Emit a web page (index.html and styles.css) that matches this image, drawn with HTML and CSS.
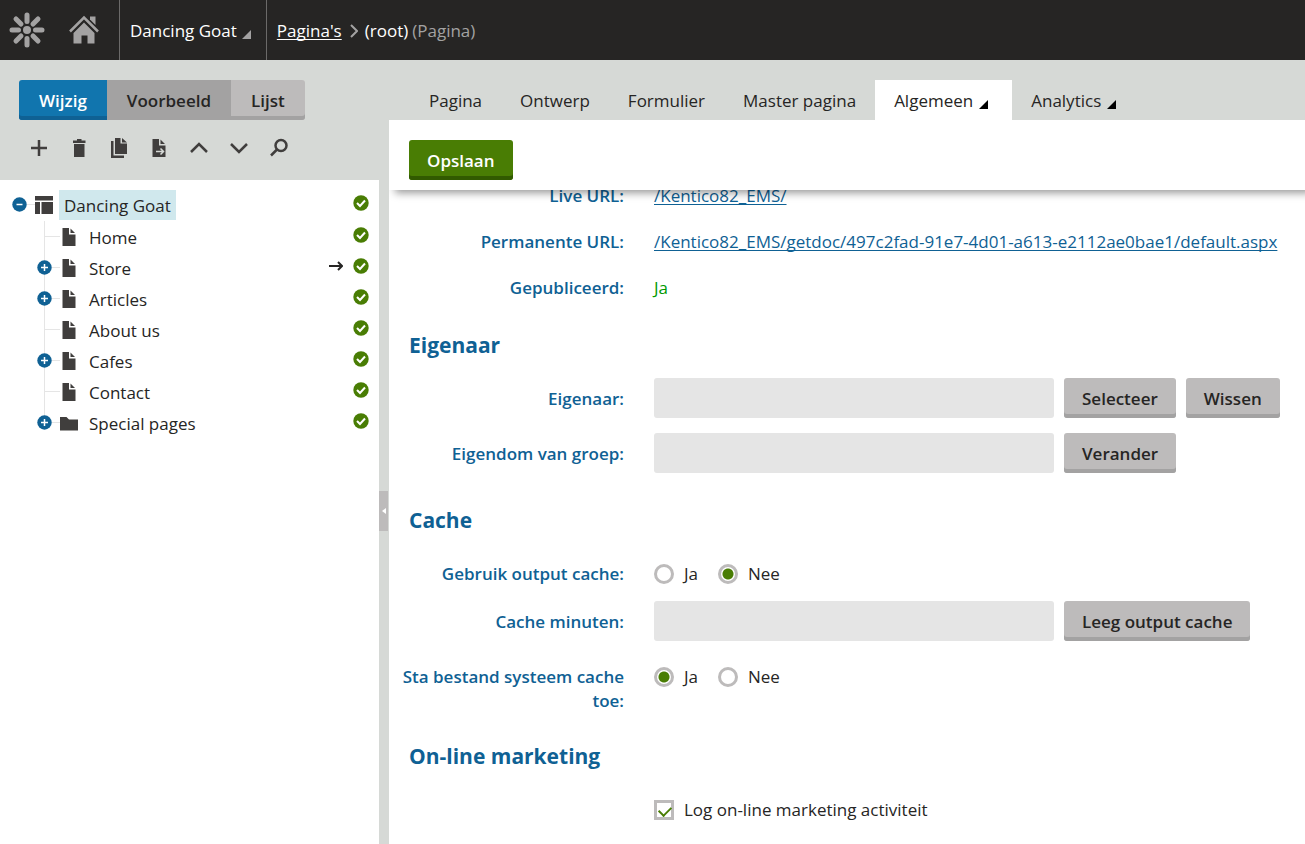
FILE: index.html
```
<!DOCTYPE html>
<html lang="nl">
<head>
    <meta charset="UTF-8">
    <meta name="viewport" content="width=device-width, initial-scale=1.0">
    <title>Dancing Goat - Pagina's</title>
    <link rel="stylesheet" href="styles.css">
</head>
<body>

    <!-- Shared icons -->
    <svg class="icon-defs" aria-hidden="true">
        <symbol id="icon-file" viewBox="0 0 18 18">
            <path d="M2.500 0H9v6.500h6.500V18h-13z"/>
            <path d="M10.500 .5L15 5h-4.500z"/>
        </symbol>
        <symbol id="icon-folder" viewBox="0 0 18 18">
            <path d="M0 3h6.500l2.500 2.500h9V16.500H0z"/>
        </symbol>
        <symbol id="icon-template" viewBox="0 0 18 18">
            <path d="M0 0h18v4.500H0zM0 6h5v12H0zM6.500 6H18v12H6.500z"/>
        </symbol>
        <symbol id="icon-plus" viewBox="0 0 15 15">
            <circle cx="7.500" cy="7.500" r="7.200" fill="#0f6194"/>
            <path d="M4 7.500h7M7.500 4v7" stroke="#fff" stroke-width="1.500"/>
        </symbol>
        <symbol id="icon-minus" viewBox="0 0 15 15">
            <circle cx="7.500" cy="7.500" r="7.200" fill="#0f6194"/>
            <path d="M4.500 7.500h6" stroke="#fff" stroke-width="1.500"/>
        </symbol>
        <symbol id="icon-check" viewBox="0 0 16 16">
            <circle cx="8" cy="8" r="7.700" fill="#497d04"/>
            <path d="M4 8l3 3 5-5.500" fill="none" stroke="#fff" stroke-width="2"/>
        </symbol>
        <symbol id="icon-caret" viewBox="0 0 9 9">
            <path d="M9 0v9H0z"/>
        </symbol>
    </svg>

    <header class="header">
        <a class="header-logo" href="#" aria-label="Kentico">
            <svg width="36" height="36" viewBox="-18 -18 36 36">
                <circle r="4"/>
                <g stroke="#a3a2a2" stroke-width="5" stroke-linecap="round">
                    <path d="M0-8.500V-15M0 8.500V15M-8.500 0H-15M8.500 0H15"/>
                    <path d="M-6-6l-5-5M6-6l5-5M-6 6l-5 5M6 6l5 5"/>
                </g>
            </svg>
        </a>
        <a class="header-home" href="#" aria-label="Home">
            <svg width="30" height="30" viewBox="0 0 30 30">
                <path d="M15 7.500L25.500 18v10.500h-7v-8h-6v8h-8V18z"/>
                <path d="M1 16.500l14-14 14 14" fill="none" stroke="#a3a2a2" stroke-width="2.500"/>
                <path d="M21 1.500h5.500V10L21 4.500z"/>
            </svg>
        </a>
        <button class="site-menu" type="button">Dancing Goat <svg class="caret" aria-hidden="true"><use href="#icon-caret"/></svg></button>
        <nav class="breadcrumb">
            <a href="#">Pagina's</a>
            <svg class="separator" viewBox="0 0 8 14"><path d="M1 1l6 6-6 6"/></svg>
            <span>(root)</span>
            <span class="page-type">(Pagina)</span>
        </nav>
    </header>

    <div class="workspace">
        <aside class="sidebar">
            <div class="sidebar-top">
                <div class="mode-switch">
                    <button class="mode mode-active" type="button">Wijzig</button>
                    <button class="mode mode-dark" type="button">Voorbeeld</button>
                    <button class="mode" type="button">Lijst</button>
                </div>
                <div class="tree-actions">
                    <button type="button" aria-label="Nieuw">
                        <svg viewBox="0 0 20 20"><path class="line" d="M2 10h16M10 2v16"/></svg>
                    </button>
                    <button type="button" aria-label="Verwijderen">
                        <svg viewBox="0 0 20 20"><path d="M5 6h10.500v13H5zM4 2.500h4V1h4.500v1.500h4v2.500H4z"/></svg>
                    </button>
                    <button type="button" aria-label="Kopiëren">
                        <svg viewBox="0 0 20 20"><path d="M6 0h5.500v5.500H18V16H6zM13 0l5 4.500h-5zM2 3h2.500v14.500H15V20H2z"/></svg>
                    </button>
                    <button type="button" aria-label="Verplaatsen">
                        <svg viewBox="0 0 20 20"><path d="M3.500 1H10v6.500h6.500V19h-13zM11.500 1.500l4.500 4.500h-4.500z"/><path d="M7 13.500h7M11.500 10.500l3 3-3 3" fill="none" stroke="#d6d9d6" stroke-width="1.500"/></svg>
                    </button>
                    <button type="button" aria-label="Omhoog">
                        <svg viewBox="0 0 20 20"><path class="line" d="M2 14l8-8 8 8"/></svg>
                    </button>
                    <button type="button" aria-label="Omlaag">
                        <svg viewBox="0 0 20 20"><path class="line" d="M2 6l8 8 8-8"/></svg>
                    </button>
                    <button type="button" aria-label="Zoeken">
                        <svg viewBox="0 0 20 20"><circle class="line" cx="12" cy="7.500" r="5.500"/><path class="line" d="M8 11.500l-6 6"/></svg>
                    </button>
                </div>
            </div>

            <div class="tree">
                <div class="tree-item tree-root">
                    <svg class="toggle"><use href="#icon-minus"/></svg>
                    <span class="branch"></span>
                    <svg class="node-icon"><use href="#icon-template"/></svg>
                    <a class="node-label selected" href="#">Dancing Goat</a>
                    <svg class="status"><use href="#icon-check"/></svg>
                </div>
                <ul class="tree-children">
                    <li class="tree-item">
                        <span class="branch branch-long"></span>
                        <svg class="node-icon"><use href="#icon-file"/></svg>
                        <a class="node-label" href="#">Home</a>
                        <svg class="status"><use href="#icon-check"/></svg>
                    </li>
                    <li class="tree-item">
                        <svg class="toggle"><use href="#icon-plus"/></svg>
                        <span class="branch"></span>
                        <svg class="node-icon"><use href="#icon-file"/></svg>
                        <a class="node-label" href="#">Store</a>
                        <svg class="redirect" viewBox="0 0 14 10"><path d="M0 5h12M9 1l4 4-4 4"/></svg>
                        <svg class="status"><use href="#icon-check"/></svg>
                    </li>
                    <li class="tree-item">
                        <svg class="toggle"><use href="#icon-plus"/></svg>
                        <span class="branch"></span>
                        <svg class="node-icon"><use href="#icon-file"/></svg>
                        <a class="node-label" href="#">Articles</a>
                        <svg class="status"><use href="#icon-check"/></svg>
                    </li>
                    <li class="tree-item">
                        <span class="branch branch-long"></span>
                        <svg class="node-icon"><use href="#icon-file"/></svg>
                        <a class="node-label" href="#">About us</a>
                        <svg class="status"><use href="#icon-check"/></svg>
                    </li>
                    <li class="tree-item">
                        <svg class="toggle"><use href="#icon-plus"/></svg>
                        <span class="branch"></span>
                        <svg class="node-icon"><use href="#icon-file"/></svg>
                        <a class="node-label" href="#">Cafes</a>
                        <svg class="status"><use href="#icon-check"/></svg>
                    </li>
                    <li class="tree-item">
                        <span class="branch branch-long"></span>
                        <svg class="node-icon"><use href="#icon-file"/></svg>
                        <a class="node-label" href="#">Contact</a>
                        <svg class="status"><use href="#icon-check"/></svg>
                    </li>
                    <li class="tree-item">
                        <svg class="toggle"><use href="#icon-plus"/></svg>
                        <span class="branch"></span>
                        <svg class="node-icon"><use href="#icon-folder"/></svg>
                        <a class="node-label" href="#">Special pages</a>
                        <svg class="status"><use href="#icon-check"/></svg>
                    </li>
                </ul>
            </div>
        </aside>

        <div class="splitter">
            <button class="splitter-handle" type="button" aria-label="Inklappen">
                <svg width="4" height="6" viewBox="0 0 4 6"><path d="M4 0v6L0 3z"/></svg>
            </button>
        </div>

        <main class="content">
            <nav class="tabs">
                <a class="tab" href="#">Pagina</a>
                <a class="tab" href="#">Ontwerp</a>
                <a class="tab" href="#">Formulier</a>
                <a class="tab" href="#">Master pagina</a>
                <a class="tab tab-active" href="#">Algemeen <svg class="caret"><use href="#icon-caret"/></svg></a>
                <a class="tab" href="#">Analytics <svg class="caret"><use href="#icon-caret"/></svg></a>
            </nav>

            <div class="save-bar">
                <button class="btn btn-primary" type="button">Opslaan</button>
            </div>

            <div class="form-scroll">
                <form class="form">
                    <div class="row row-text">
                        <span class="row-label">Live URL:</span>
                        <div class="row-value"><a href="#">/Kentico82_EMS/</a></div>
                    </div>
                    <div class="row row-text">
                        <span class="row-label">Permanente URL:</span>
                        <div class="row-value"><a href="#">/Kentico82_EMS/getdoc/497c2fad-91e7-4d01-a613-e2112ae0bae1/default.aspx</a></div>
                    </div>
                    <div class="row row-text">
                        <span class="row-label">Gepubliceerd:</span>
                        <div class="row-value published">Ja</div>
                    </div>

                    <h2>Eigenaar</h2>
                    <div class="row">
                        <label class="row-label" for="owner">Eigenaar:</label>
                        <div class="row-controls">
                            <input class="textbox" type="text" id="owner" disabled>
                            <button class="btn" type="button">Selecteer</button>
                            <button class="btn" type="button">Wissen</button>
                        </div>
                    </div>
                    <div class="row">
                        <label class="row-label" for="group">Eigendom van groep:</label>
                        <div class="row-controls">
                            <input class="textbox" type="text" id="group" disabled>
                            <button class="btn" type="button">Verander</button>
                        </div>
                    </div>

                    <h2>Cache</h2>
                    <div class="row">
                        <span class="row-label" id="outputCacheLabel">Gebruik output cache:</span>
                        <div class="row-options" role="radiogroup" aria-labelledby="outputCacheLabel">
                            <label class="option"><input type="radio" name="outputCache">Ja</label>
                            <label class="option"><input type="radio" name="outputCache" checked>Nee</label>
                        </div>
                    </div>
                    <div class="row">
                        <label class="row-label" for="cacheMinutes">Cache minuten:</label>
                        <div class="row-controls">
                            <input class="textbox" type="text" id="cacheMinutes" disabled>
                            <button class="btn" type="button">Leeg output cache</button>
                        </div>
                    </div>
                    <div class="row">
                        <span class="row-label" id="fileCacheLabel">Sta bestand systeem cache toe:</span>
                        <div class="row-options" role="radiogroup" aria-labelledby="fileCacheLabel">
                            <label class="option"><input type="radio" name="fileCache" checked>Ja</label>
                            <label class="option"><input type="radio" name="fileCache">Nee</label>
                        </div>
                    </div>

                    <h2>On-line marketing</h2>
                    <div class="row">
                        <span class="row-label"></span>
                        <div class="row-options">
                            <label class="option"><input type="checkbox" checked>Log on-line marketing activiteit</label>
                        </div>
                    </div>
                </form>
            </div>
        </main>
    </div>

</body>
</html>
```
FILE: styles.css
```
* {
    box-sizing: border-box;
}

body {
    display: flex;
    flex-direction: column;
    height: 100vh;
    margin: 0;
    overflow: hidden;
    background: #fff;
    color: #262524;
    font-family: "Open Sans", "Segoe UI", sans-serif;
    font-size: 17px;
    line-height: 24px;
}

a {
    color: inherit;
    text-decoration-skip-ink: none;
    text-underline-offset: 2px;
}

button {
    border: none;
    padding: 0;
    background: none;
    color: inherit;
    font: inherit;
    cursor: pointer;
}

svg {
    flex: none;
}

.icon-defs {
    display: none;
}

.caret {
    width: 9px;
    height: 9px;
}

/* Header */
.header {
    display: flex;
    flex: none;
    height: 60px;
    background: #262524;
    color: #fff;
}

.header-logo, .header-home {
    display: flex;
    align-items: center;
    fill: #a3a2a2;
}

.header-logo {
    padding-left: 9px;
}

.header-home {
    padding: 0 20px 0 24px;
}

.site-menu {
    display: flex;
    align-items: center;
    gap: 5px;
    padding: 2px 15px 0 10px;
    border-left: 1px solid #6b6a69;
    border-right: 1px solid #6b6a69;
    fill: #a3a2a2;
}

.site-menu .caret {
    margin-top: 6px;
}

.breadcrumb {
    display: flex;
    align-items: center;
    padding: 2px 0 0 10px;
}

.separator {
    width: 8px;
    height: 14px;
    margin: 0 7px 0 8px;
    fill: none;
    stroke: #a3a2a2;
    stroke-width: 2;
}

.page-type {
    margin-left: 4px;
    color: #a3a2a2;
}

/* Layout */
.workspace {
    display: flex;
    flex: 1;
    min-height: 0;
}

.sidebar {
    flex: none;
    width: 379px;
}

.splitter {
    display: flex;
    align-items: center;
    flex: none;
    width: 10px;
    padding-top: 118px;
    background: #d6d9d6;
}

.splitter-handle {
    display: flex;
    align-items: center;
    justify-content: center;
    width: 9px;
    height: 40px;
    background: #bdbbbb;
    fill: #fff;
}

.content {
    display: flex;
    flex: 1;
    flex-direction: column;
    min-width: 0;
}

/* Sidebar */
.sidebar-top {
    height: 120px;
    padding: 20px 19px 0;
    background: #d6d9d6;
}

.mode-switch {
    display: flex;
}

.mode {
    height: 40px;
    padding: 2px 20px 0;
    background: #bdbbbb;
    box-shadow: inset 0 -4px #a3a2a2;
    font-weight: 600;
}

.mode:first-child {
    border-radius: 3px 0 0 3px;
}

.mode:last-child {
    border-radius: 0 3px 3px 0;
}

.mode-active {
    background: #1175ae;
    box-shadow: inset 0 -4px #0f6194;
    color: #fff;
}

.mode-dark {
    background: #a3a2a2;
}

.tree-actions {
    display: flex;
    padding-top: 8px;
}

.tree-actions button {
    display: flex;
    align-items: center;
    justify-content: center;
    width: 40px;
    height: 40px;
}

.tree-actions svg {
    width: 20px;
    height: 20px;
    fill: #403e3d;
}

.tree-actions .line {
    fill: none;
    stroke: #403e3d;
    stroke-width: 2.5;
}

.tree {
    padding: 9px 10px 0 12px;
}

.tree-item {
    display: flex;
    align-items: center;
    height: 31px;
}

.tree-root {
    margin-bottom: 1px;
}

.tree-children {
    margin: 0 0 0 32px;
    padding: 0;
    list-style: none;
    background: linear-gradient(#e5e5e5, #e5e5e5) no-repeat 0 0 / 1px calc(100% - 16px);
}

.toggle {
    width: 15px;
    height: 15px;
}

.tree-children .toggle {
    margin-left: -7px;
}

.branch {
    width: 8px;
    height: 1px;
    background: #e5e5e5;
}

.branch-long {
    width: 16px;
}

.node-icon {
    width: 18px;
    height: 18px;
    fill: #403e3d;
}

.node-label {
    margin: 0 auto 0 6px;
    padding: 4px 5px 2px;
    text-decoration: none;
}

.selected {
    background: #d0e8ed;
}

.status {
    width: 16px;
    height: 16px;
    margin-bottom: 4px;
}

.redirect {
    width: 14px;
    height: 10px;
    margin: 0 10px 4px 0;
    fill: none;
    stroke: #262524;
    stroke-width: 2;
}

/* Tabs */
.tabs {
    display: flex;
    flex: none;
    height: 60px;
    padding: 20px 21px 0;
    background: #d6d9d6;
}

.tab {
    display: flex;
    align-items: center;
    gap: 6px;
    padding: 2px 19px 0;
    text-decoration: none;
    white-space: nowrap;
}

.tab .caret {
    margin: 6px 5px 0 0;
}

.tab-active {
    background: #fff;
}

.save-bar {
    z-index: 1;
    flex: none;
    padding: 20px 20px 10px;
    background: #fff;
    box-shadow: 6px 3px 8px rgba(0, 0, 0, 0.4);
    clip-path: inset(0 0 -16px 0);
}

/* Buttons */
.btn {
    flex: none;
    height: 40px;
    padding: 2px 18px 0;
    border-radius: 3px;
    background: #bdbbbb;
    box-shadow: inset 0 -4px #a3a2a2;
    font-weight: 600;
}

.btn-primary {
    background: #497d04;
    box-shadow: inset 0 -4px #315a00;
    color: #fff;
}

/* Form */
.form-scroll {
    flex: 1;
    min-height: 0;
    overflow: hidden;
}

/* scrolled a little, so the first row runs under the save bar */
.form {
    margin-top: -15px;
    padding: 0 10px;
}

.form h2 {
    margin: 0;
    padding: 16px 10px 17px;
    color: #0f6194;
    font-size: 21px;
    font-weight: 700;
    line-height: 32px;
}

.row {
    display: flex;
    gap: 30px;
}

.row-text {
    height: 46px;
}

.row-label {
    flex: none;
    width: 225px;
    margin-bottom: 11px;
    padding-top: 9px;
    color: #0f6194;
    font-weight: 600;
    text-align: right;
}

.row-value {
    padding-top: 9px;
}

.row-value a {
    color: #0f6194;
}

.published {
    color: #009900;
}

.row-controls {
    display: flex;
    gap: 10px;
    margin-bottom: 15px;
}

.textbox {
    width: 400px;
    height: 40px;
    padding: 0 10px;
    border: none;
    border-radius: 3px;
    background: #e5e5e5;
    font: inherit;
}

.row-options {
    display: flex;
    align-items: flex-start;
    gap: 20px;
    margin-bottom: 15px;
    padding-top: 9px;
}

.option {
    display: flex;
    align-items: center;
    gap: 10px;
}

.option input {
    appearance: none;
    width: 20px;
    height: 20px;
    margin: 0;
    border: 3px solid #bdbbbb;
    background: #fff;
}

.option input[type="radio"] {
    border-radius: 50%;
}

.option input[type="radio"]:checked {
    background: radial-gradient(#497d04 5px, #fff 6px);
}

.option input[type="checkbox"]:checked::before {
    content: "";
    display: block;
    width: 10px;
    height: 6px;
    margin: 3px 2px;
    border: solid #497d04;
    border-width: 0 0 2px 2px;
    transform: rotate(-45deg);
}
```
